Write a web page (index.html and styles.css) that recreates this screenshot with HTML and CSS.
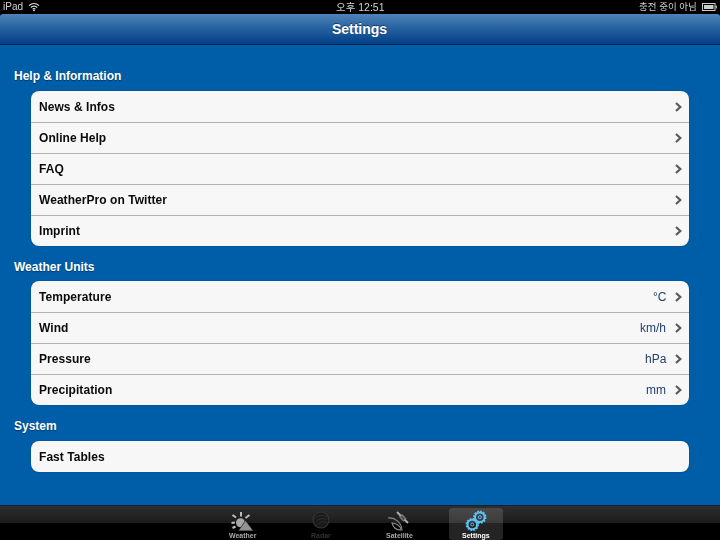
FILE: index.html
```html
<!DOCTYPE html>
<html lang="en">
<head>
<meta charset="utf-8">
<title>Settings</title>
<link rel="stylesheet" href="styles.css">
</head>
<body>
<div class="app">
  <div class="status">
    <div class="status-left">iPad
      <svg class="wifi" width="12" height="10" viewBox="0 0 12 10"><path d="M1 3.6C4 .8 8 .8 11 3.6M2.8 5.5C4.8 3.8 7.2 3.8 9.2 5.5M4.6 7.3C5.4 6.6 6.6 6.6 7.4 7.3" fill="none" stroke="#ddd" stroke-width="1.2"/><path d="M6 9.6 4.9 8.4C5.6 7.9 6.4 7.9 7.1 8.4Z" fill="#ddd"/></svg>
    </div>
    <div class="status-center">오후 12:51</div>
    <div class="status-right">충전 중이 아님
      <svg width="15" height="8" viewBox="0 0 15 8"><rect x=".5" y=".5" width="12.5" height="7" fill="none" stroke="#ccc"/><rect x="2" y="2" width="9.5" height="4" fill="#ccc"/><rect x="13.5" y="2.5" width="1.5" height="3" fill="#aaa"/></svg>
    </div>
  </div>
  <header class="nav">Settings</header>
  <main class="content">
    <h2 class="section-title section-title-edge">Help &amp; Information</h2>
    <ul class="group">
      <li class="row"><span class="label">News &amp; Infos</span><svg class="chev" width="7" height="10" viewBox="0 0 7 10"><path d="M1 1 5.300 5 1 9" fill="none" stroke="#5a5a5a" stroke-width="2.200"/></svg></li>
      <li class="row"><span class="label">Online Help</span><svg class="chev" width="7" height="10" viewBox="0 0 7 10"><path d="M1 1 5.300 5 1 9" fill="none" stroke="#5a5a5a" stroke-width="2.200"/></svg></li>
      <li class="row"><span class="label">FAQ</span><svg class="chev" width="7" height="10" viewBox="0 0 7 10"><path d="M1 1 5.300 5 1 9" fill="none" stroke="#5a5a5a" stroke-width="2.200"/></svg></li>
      <li class="row"><span class="label">WeatherPro on Twitter</span><svg class="chev" width="7" height="10" viewBox="0 0 7 10"><path d="M1 1 5.300 5 1 9" fill="none" stroke="#5a5a5a" stroke-width="2.200"/></svg></li>
      <li class="row"><span class="label">Imprint</span><svg class="chev" width="7" height="10" viewBox="0 0 7 10"><path d="M1 1 5.300 5 1 9" fill="none" stroke="#5a5a5a" stroke-width="2.200"/></svg></li>
    </ul>
    <h2 class="section-title">Weather Units</h2>
    <ul class="group">
      <li class="row"><span class="label">Temperature</span><span class="value">°C</span><svg class="chev" width="7" height="10" viewBox="0 0 7 10"><path d="M1 1 5.300 5 1 9" fill="none" stroke="#5a5a5a" stroke-width="2.200"/></svg></li>
      <li class="row"><span class="label">Wind</span><span class="value">km/h</span><svg class="chev" width="7" height="10" viewBox="0 0 7 10"><path d="M1 1 5.300 5 1 9" fill="none" stroke="#5a5a5a" stroke-width="2.200"/></svg></li>
      <li class="row"><span class="label">Pressure</span><span class="value">hPa</span><svg class="chev" width="7" height="10" viewBox="0 0 7 10"><path d="M1 1 5.300 5 1 9" fill="none" stroke="#5a5a5a" stroke-width="2.200"/></svg></li>
      <li class="row"><span class="label">Precipitation</span><span class="value">mm</span><svg class="chev" width="7" height="10" viewBox="0 0 7 10"><path d="M1 1 5.300 5 1 9" fill="none" stroke="#5a5a5a" stroke-width="2.200"/></svg></li>
    </ul>
    <h2 class="section-title section-title-edge">System</h2>
    <ul class="group">
      <li class="row"><span class="label">Fast Tables</span></li>
    </ul>
  </main>
  <nav class="tabs">
    <div class="tab">
      <svg width="24" height="20" viewBox="0 0 24 20"><circle cx="9.500" cy="11.700" r="4.500" fill="#a6a6a6"/><g stroke="#bdbdbd" stroke-width="2"><path d="M10 1V5.500M18.500 4 14.500 7M1.500 4 5 6.500M.5 12 3.800 11.500M1.500 17 4.500 15.500"/></g><path d="M7 20 14.500 9 22.500 20Z" fill="#1f1f1f"/><path d="M8 19.500 14.500 10 21.800 19.500Z" fill="#929292"/></svg>
      <span class="tab-label">Weather</span>
    </div>
    <div class="tab tab-dim">
      <svg width="24" height="20" viewBox="0 0 24 20"><circle cx="12" cy="9" r="8" fill="#1a1a1a" stroke="#363636" stroke-width="1.200"/><path d="M6 7.500C8 4.500 14 3 18 6M7 10.500C10 7.500 15 6.500 18.500 8.500M9 13C12 10.500 15 10.500 18 11.500" fill="none" stroke="#2f2f2f"/></svg>
      <span class="tab-label">Radar</span>
    </div>
    <div class="tab">
      <svg width="24" height="20" viewBox="0 0 24 20"><g fill="none" stroke="#8c8c8c" stroke-width="1.100"><path d="M1 7C8 6 15 12 15 19.500"/><path d="M5 12C9 12 14 15 14 19C9 19 6 16 5 12Z"/></g><path d="M10 1 21 12" stroke="#b0b0b0" stroke-width="1.800"/><rect x="13" y="5" width="5.500" height="3.500" transform="rotate(45 15.700 6.700)" fill="#555" stroke="#a5a5a5" stroke-width=".8"/></svg>
      <span class="tab-label">Satellite</span>
    </div>
    <div class="tab tab-active">
      <svg width="24" height="22" viewBox="0 0 24 22"><g fill="none" stroke="#5cc4f4"><circle cx="8.300" cy="15.500" r="4.800" stroke-width="2"/><circle cx="15.800" cy="8.200" r="4.800" stroke-width="2"/><circle cx="8.300" cy="15.500" r="6" stroke-width="1.400" stroke-dasharray="1.800 1.300"/><circle cx="15.800" cy="8.200" r="6" stroke-width="1.400" stroke-dasharray="1.800 1.300"/><circle cx="8.300" cy="15.500" r="1.500" stroke-width="1"/><circle cx="15.800" cy="8.200" r="1.500" stroke-width="1"/></g></svg>
      <span class="tab-label">Settings</span>
    </div>
  </nav>
</div>
</body>
</html>
```
FILE: styles.css
```css
* { box-sizing: border-box; }
html, body { margin: 0; padding: 0; }
body { background: #000; font-family: "Liberation Sans", Arial, sans-serif; }
.app { width: 720px; height: 540px; display: flex; flex-direction: column; overflow: hidden; background: #000; }
.status { height: 14px; flex: none; display: grid; grid-template-columns: 1fr auto 1fr; align-items: center; padding: 0 3px; color: #d2d2d2; font-size: 10.500px; line-height: 14px; font-family: "Liberation Sans", "Noto Sans CJK KR", sans-serif; }
.status-left { display: flex; align-items: center; gap: 5px; font-size: 10px; will-change: transform; }
.status-center { will-change: transform; }
.status-right { display: flex; align-items: center; justify-content: flex-end; gap: 5px; font-size: 9.500px; will-change: transform; }
.wifi { display: block; }
.nav { height: 31px; flex: none; border-bottom: 1px solid #00264f; border-radius: 3px 3px 0 0; background: linear-gradient(#4f84b8, #245f9f 50%, #033f86); color: #fff; font-size: 14px; font-weight: bold; line-height: 30px; text-align: center; padding-right: 1px; text-shadow: 0 -1px 0 rgba(0,0,0,.45); }
.content { flex: 1; background: #005da8; padding: 23px 31px 0 31px; }
.section-title { margin: 0 0 0 -17px; font-size: 12px; line-height: 15px; height: 22px; padding-top: 1px; font-weight: bold; color: #fff; text-shadow: 0 1px 1px rgba(0,0,0,.4); }
.section-title-edge { height: 23px; }
.group { list-style: none; margin: 0 0 13px; padding: 0; background: #f7f7f7; border-radius: 8px; box-shadow: 0 0 1px rgba(0,0,0,.6); }
.row { height: 31px; display: flex; align-items: center; padding: 0 7px 0 8px; border-top: 1px solid #b3b3b3; }
.row:first-child { border-top: 0; padding-top: 1px; }
.label { flex: 1; font-size: 12px; font-weight: bold; letter-spacing: .05px; color: #0a0a0a; will-change: transform; }
.value { font-size: 12px; color: #23406f; margin-right: 9px; will-change: transform; }
.chev { display: block; flex: none; }
.tabs { height: 35px; flex: none; display: flex; justify-content: center; background: linear-gradient(#2e2e2e, #1b1b1b 50%, #000 50%); border-top: 1px solid #12213a; padding: 2px 13px 0 0; }
.tab { width: 78px; height: 32px; display: flex; flex-direction: column; align-items: center; justify-content: flex-end; border-radius: 3px; }
.tab-active { width: 54px; margin-left: 11px; background: rgba(255,255,255,.14); }
.tab-label { font-size: 7px; line-height: 9px; font-weight: bold; color: #a9a9a9; will-change: transform; }
.tab-active .tab-label { color: #fff; }
.tab-dim .tab-label { color: #333; }
```
